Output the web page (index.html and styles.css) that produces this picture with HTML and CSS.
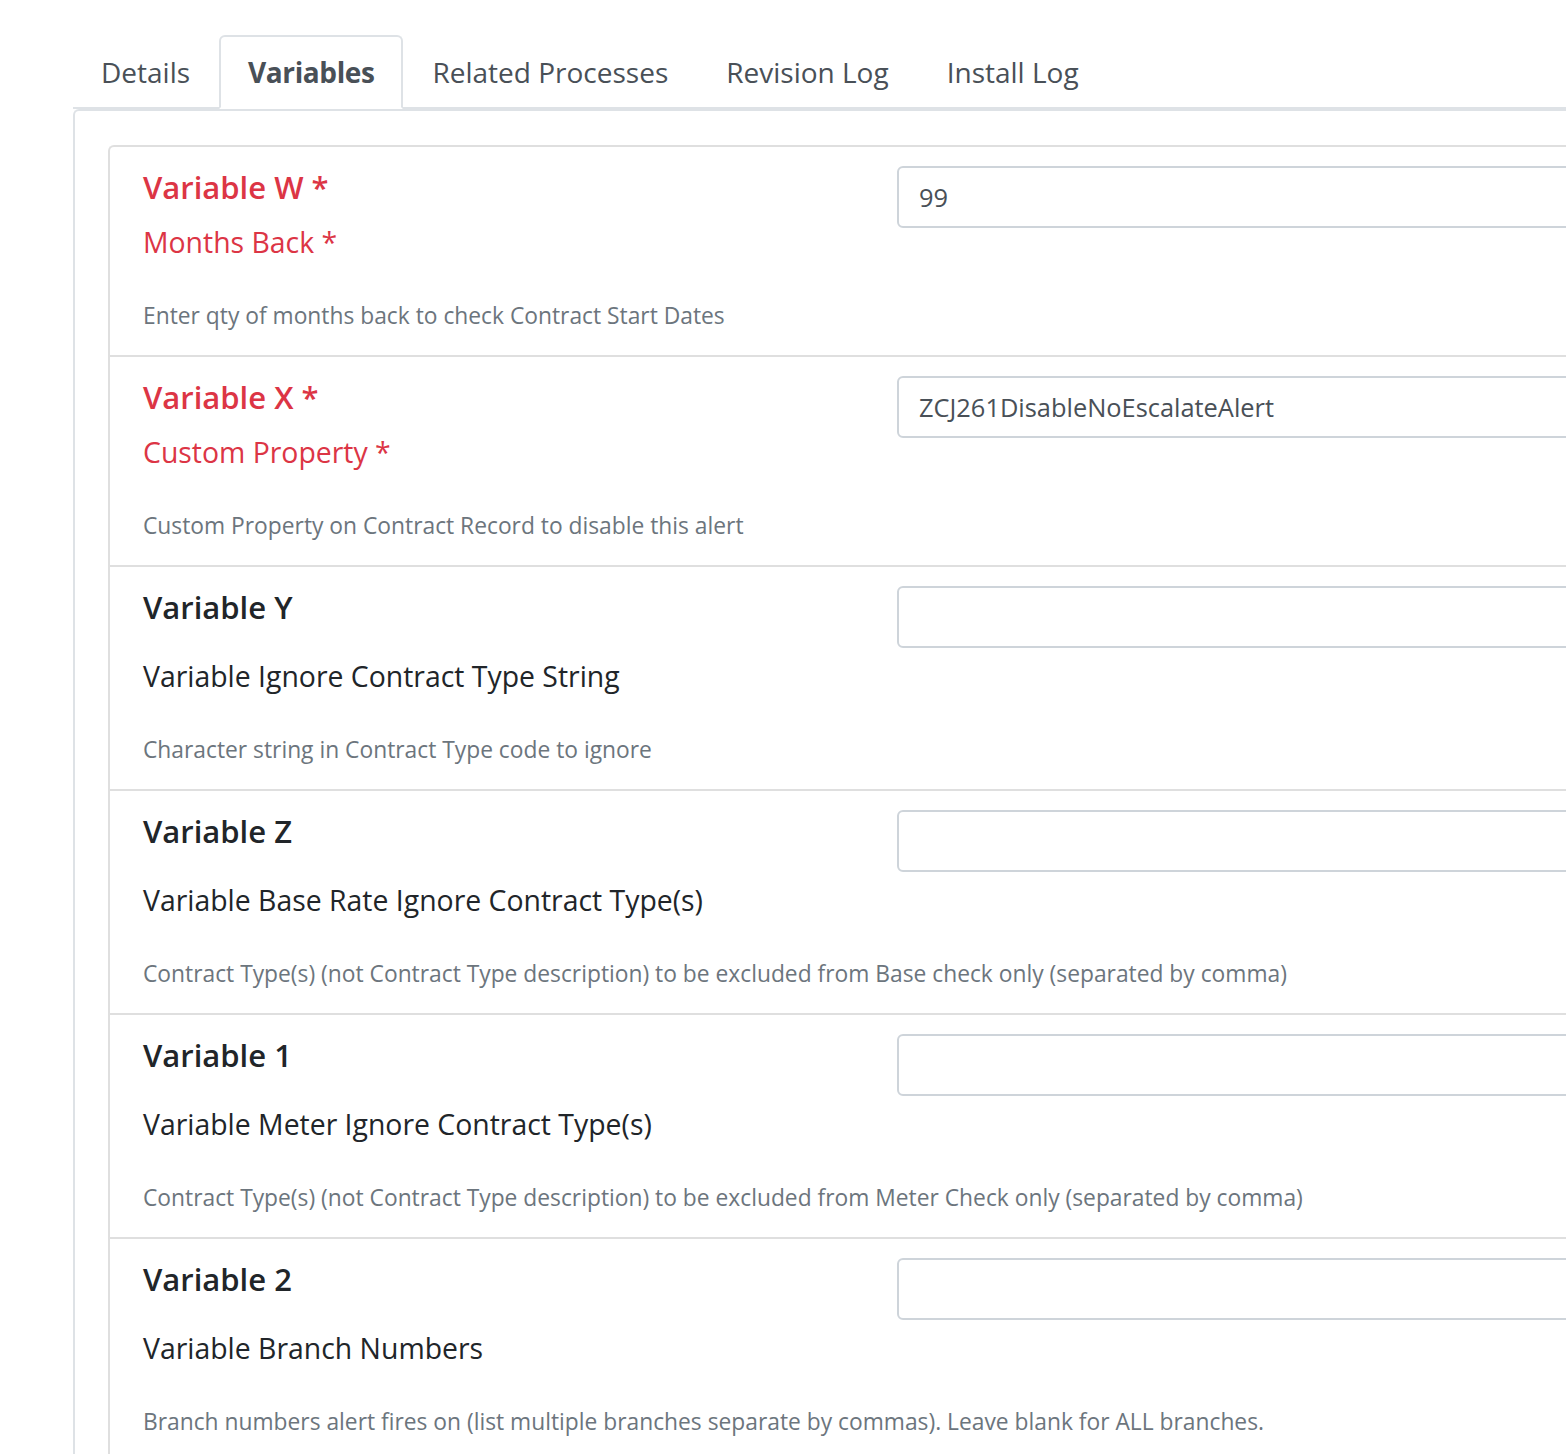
FILE: index.html
```html
<!DOCTYPE html>
<html lang="en">
<head>
  <meta charset="UTF-8">
  <meta name="viewport" content="width=device-width, initial-scale=1.0">
  <title>Process - Variables</title>
  <link rel="stylesheet" href="styles.css">
</head>
<body>
  <div class="page">
    <ul class="tabs">
      <li class="tab">Details</li>
      <li class="tab active">Variables</li>
      <li class="tab">Related Processes</li>
      <li class="tab">Revision Log</li>
      <li class="tab">Install Log</li>
    </ul>

    <div class="tab-pane">
      <div class="var-list">
        <div class="var-row">
          <div class="var-info">
            <h5 class="var-name required">Variable W *</h5>
            <div class="var-label required">Months Back *</div>
            <small class="var-help">Enter qty of months back to check Contract Start Dates</small>
          </div>
          <div class="var-value"><input class="field" type="text" value="99"></div>
        </div>

        <div class="var-row">
          <div class="var-info">
            <h5 class="var-name required">Variable X *</h5>
            <div class="var-label required">Custom Property *</div>
            <small class="var-help">Custom Property on Contract Record to disable this alert</small>
          </div>
          <div class="var-value"><input class="field" type="text" value="ZCJ261DisableNoEscalateAlert"></div>
        </div>

        <div class="var-row">
          <div class="var-info">
            <h5 class="var-name">Variable Y</h5>
            <div class="var-label optional">Variable Ignore Contract Type String</div>
            <small class="var-help">Character string in Contract Type code to ignore</small>
          </div>
          <div class="var-value"><input class="field" type="text" value=""></div>
        </div>

        <div class="var-row">
          <div class="var-info">
            <h5 class="var-name">Variable Z</h5>
            <div class="var-label optional">Variable Base Rate Ignore Contract Type(s)</div>
            <small class="var-help">Contract Type(s) (not Contract Type description) to be excluded from Base check only (separated by comma)</small>
          </div>
          <div class="var-value"><input class="field" type="text" value=""></div>
        </div>

        <div class="var-row">
          <div class="var-info">
            <h5 class="var-name">Variable 1</h5>
            <div class="var-label optional">Variable Meter Ignore Contract Type(s)</div>
            <small class="var-help">Contract Type(s) (not Contract Type description) to be excluded from Meter Check only (separated by comma)</small>
          </div>
          <div class="var-value"><input class="field" type="text" value=""></div>
        </div>

        <div class="var-row">
          <div class="var-info">
            <h5 class="var-name">Variable 2</h5>
            <div class="var-label optional">Variable Branch Numbers</div>
            <small class="var-help">Branch numbers alert fires on (list multiple branches separate by commas). Leave blank for ALL branches.</small>
          </div>
          <div class="var-value"><input class="field" type="text" value=""></div>
        </div>
      </div>
    </div>
  </div>
</body>
</html>
```

FILE: styles.css
```css
body {
  margin: 0;
  height: 1454px;
  overflow: hidden;
  font-family: "Open Sans", "Noto Sans", sans-serif;
  color: #212529;
  background: #fff;
}
.page {
  width: 1800px;
  padding: 35px 0 0 73px;
}

/* tabs */
.tabs {
  display: flex;
  list-style: none;
  margin: 0;
  padding: 0;
  border-bottom: 2px solid #dee2e6;
}
.tab {
  padding: 13px 27px;
  margin-bottom: -2px;
  border: 2px solid transparent;
  border-radius: 6px 6px 0 0;
  font-size: 28px;
  line-height: 44px;
  color: #495057;
}
.tab:first-child {
  padding-left: 26px;
}
.tab.active {
  font-weight: 700;
  letter-spacing: -0.4px;
  background: #fff;
  border-color: #dee2e6 #dee2e6 #fff;
}

/* pane */
.tab-pane {
  padding: 34px 0 0 33px;
  border: 2px solid #dee2e6;
  border-right: none;
  border-bottom: none;
  border-radius: 6px 0 0 0;
}
.var-list {
  border: 2px solid #dfdfdf;
  border-right: none;
  border-bottom: none;
  border-radius: 6px 0 0 0;
}
.var-row {
  display: grid;
  grid-template-columns: 730px 1fr;
  column-gap: 24px;
  padding: 20px 0 22px 33px;
  border-bottom: 2px solid #dfdfdf;
}
.var-info {
  display: flex;
  flex-direction: column;
  align-items: flex-start;
}
.var-name {
  margin: 0;
  font-size: 31px;
  font-weight: 600;
  line-height: 40px;
  color: #212529;
}
.var-label {
  font-size: 28.4px;
  line-height: 40px;
  margin-top: 15px;
  white-space: nowrap;
}
.var-label.optional {
  margin-top: 29px;
}
.required {
  color: #dc3545;
}
.var-help {
  margin-top: 37px;
  font-size: 22.8px;
  line-height: 34px;
  color: #6c757d;
  white-space: nowrap;
}

/* inputs */
.field {
  box-sizing: border-box;
  width: 100%;
  height: 62px;
  margin-top: -1px;
  padding: 0 20px;
  border: 2px solid #ced4da;
  border-radius: 6px;
  font-family: inherit;
  font-size: 25.4px;
  color: #495057;
  background: #fff;
}
```
